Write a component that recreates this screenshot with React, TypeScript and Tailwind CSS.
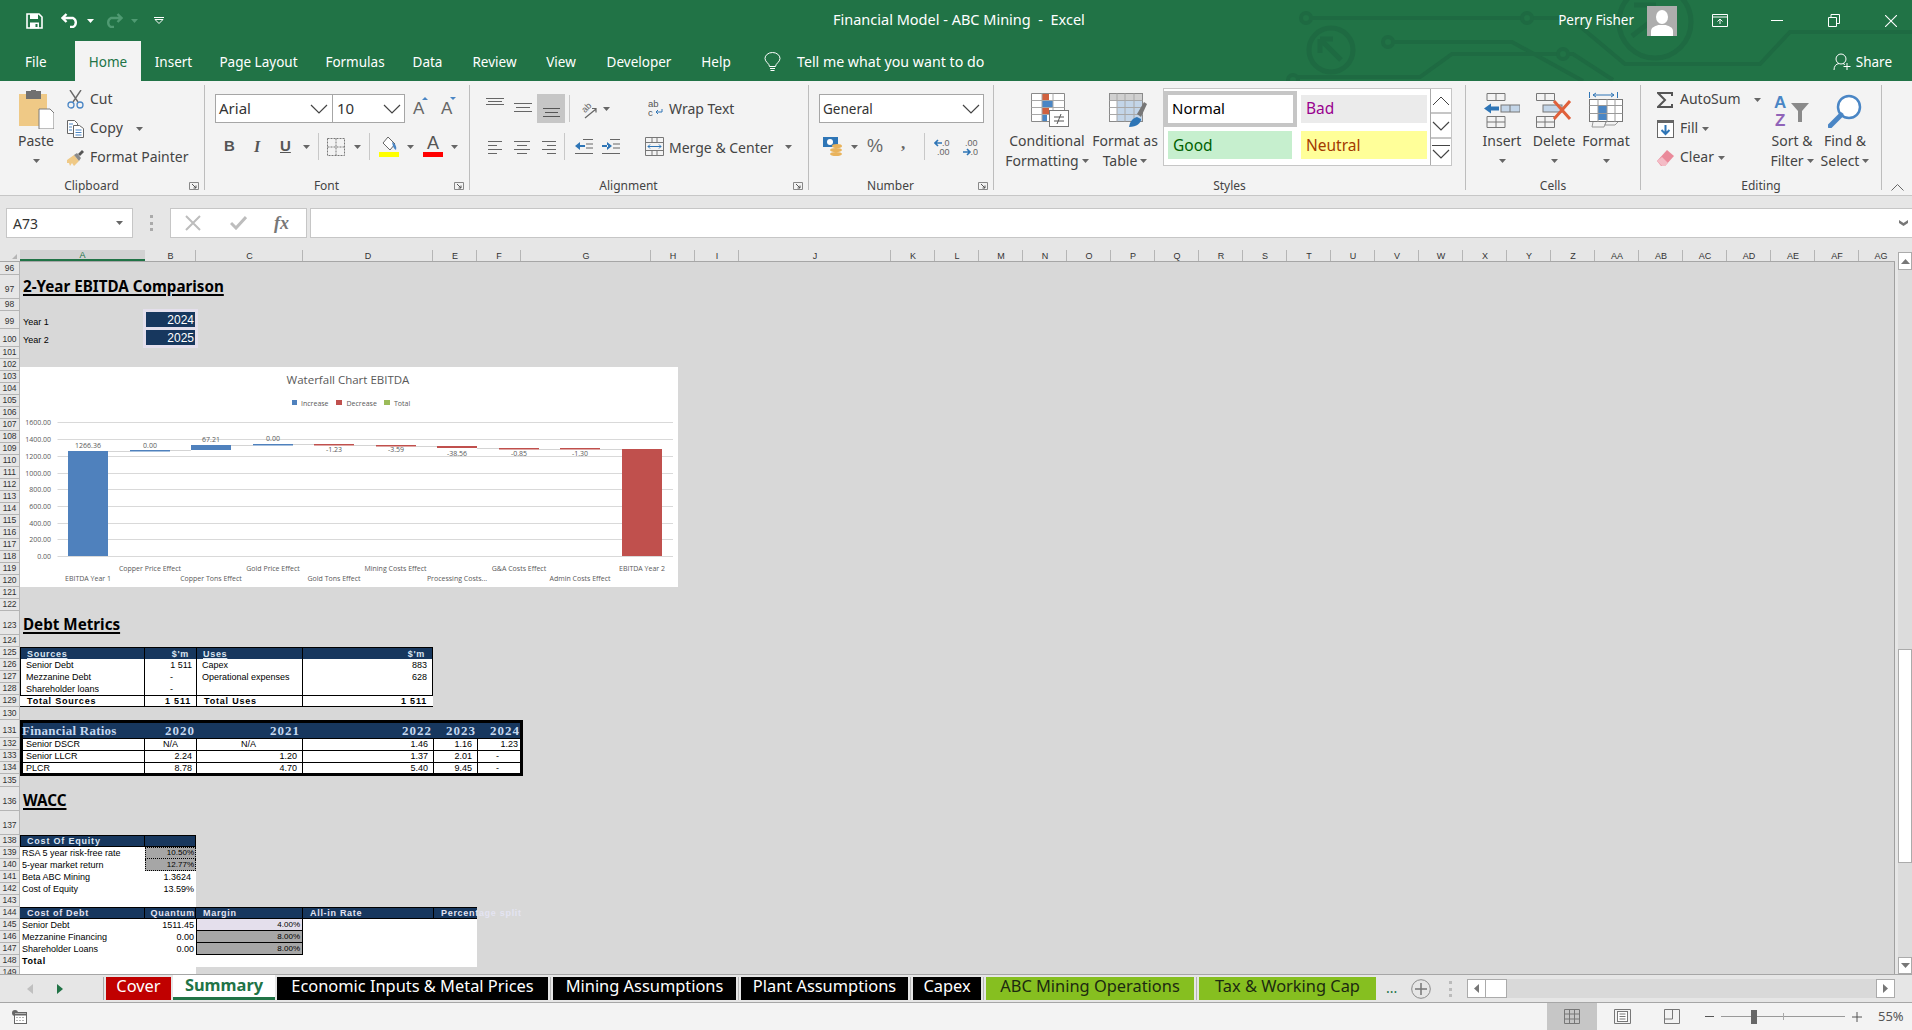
import { ReactNode } from 'react';

const Caret = ({ className = '' }: { className?: string }) => (
  <svg width="7" height="4" viewBox="0 0 7 4" className={`shrink-0 ${className}`}>
    <path d="M0 0h7L3.5 4z" fill="#666" />
  </svg>
);

const Chevron = () => (
  <svg width="18" height="10" viewBox="0 0 18 10" className="shrink-0">
    <path d="M1 1l8 8 8-8" fill="none" stroke="#444" strokeWidth="1.2" />
  </svg>
);

const Launcher = () => (
  <svg width="10" height="8" viewBox="0 0 10 8" className="shrink-0 mt-[4px] ml-[6px] mr-[5px]">
    <path d="M.5 7.5V.5h9v7z" fill="none" stroke="#888" />
    <path d="M3 2l4 4M7 3.5V6H4.5" fill="none" stroke="#555" />
  </svg>
);

const Group = ({ w, label, launcher, children }: { w: string; label: string; launcher?: boolean; children: ReactNode }) => (
  <div className={`flex flex-col shrink-0 h-[105px] border-r border-[#bdbdbd] ${w}`}>
    <div className="flex h-[93px]">{children}</div>
    <div className="flex h-[12px]">
      <div className="flex-1 text-center text-[12px] leading-[16px] text-[#444]">{label}</div>
      {launcher && <Launcher />}
    </div>
  </div>
);

const BigButton = ({ w, icon, lines, caretRow }: { w: string; icon: ReactNode; lines: string[]; caretRow?: boolean }) => (
  <div className={`flex flex-col items-center shrink-0 text-[14px] text-[#444] ${w}`}>
    <div className="h-[46px] flex items-center justify-center">{icon}</div>
    <div className="h-[20px] leading-[20px] whitespace-nowrap">{lines[0]}</div>
    {caretRow ? (
      <div className="h-[20px] flex items-center"><Caret /></div>
    ) : (
      <div className="h-[20px] leading-[20px] whitespace-nowrap flex items-center gap-[3px]">
        {lines[1]} <Caret />
      </div>
    )}
  </div>
);

const Circuit = () => (
  <svg viewBox="0 0 1912 81" className="absolute inset-0 w-full h-full" fill="none" stroke="#1e6a42" strokeWidth="4">
    <circle cx="1306" cy="18" r="5" />
    <path d="M1311 18h211M1532 18h38l55 46h135l30-32h122" />
    <circle cx="1527" cy="18" r="5" />
    <circle cx="1388" cy="42" r="5" />
    <path d="M1393 42h119l71 39" />
    <circle cx="1293" cy="80" r="5" />
    <path d="M1298 77h122l32-23h106M1568 54h5l40 26" />
    <circle cx="1563" cy="54" r="5" />
    <circle cx="1331" cy="50" r="22" strokeWidth="5" />
    <path d="M1320 39h13M1320 39v14M1320 39l21 21" strokeWidth="5" />
    <circle cx="1655" cy="22" r="36" strokeWidth="5" />
    <path d="M1634 5h22M1658 16l-26 20" strokeWidth="5" />
  </svg>
);

const SaveIcon = () => (
  <svg width="17" height="16" viewBox="0 0 17 16" className="shrink-0">
    <path d="M1 1h12l3 3v11H1z" fill="none" stroke="#fff" strokeWidth="1.6" />
    <rect x="4" y="1" width="8" height="5" fill="#fff" />
    <rect x="4" y="9.5" width="9" height="6" fill="#fff" />
    <rect x="9.5" y="11" width="2" height="3" fill="#217346" />
  </svg>
);

const UndoIcon = ({ color }: { color: string }) => (
  <svg width="19" height="15" viewBox="0 0 19 15" className="shrink-0">
    <path d="M2 5h10a5 5 0 0 1 0 9H9M5.5 1L1.5 5l4 4" fill="none" stroke={color} strokeWidth="2.4" />
  </svg>
);

const TitleBar = () => (
  <div className="relative h-[81px] shrink-0 bg-[#217346] text-white overflow-hidden">
    <Circuit />
    <div className="relative flex items-center h-[41px] text-[13.5px]">
      <div className="w-[833px] flex items-center shrink-0 pl-[26px]">
        <SaveIcon />
        <div className="ml-[18px]"><UndoIcon color="#fff" /></div>
        <Caret className="ml-[7px] [&>path]:fill-white" />
        <div className="ml-[10px] -scale-x-100"><UndoIcon color="#4f9a72" /></div>
        <Caret className="ml-[8px] [&>path]:fill-[#4f9a72]" />
        <svg width="10" height="7" viewBox="0 0 10 7" className="ml-[16px]">
          <path d="M0 .5h10M1 2.5l4 4 4-4z" fill="none" stroke="#fff" />
        </svg>
      </div>
      <div className="whitespace-pre text-[14.5px] -mt-[1px]">Financial Model - ABC Mining  -  Excel</div>
      <div className="ml-auto flex items-center mr-[15px]">
        <span className="mr-[13px]">Perry Fisher</span>
        <svg width="30" height="30" viewBox="0 0 30 30" className="shrink-0">
          <rect width="30" height="30" fill="#adadad" />
          <ellipse cx="15" cy="11" rx="6" ry="7" fill="#fff" />
          <path d="M4 30v-5c0-4 5-5 7-6h8c2 1 7 2 7 6v5z" fill="#fff" />
        </svg>
        <svg width="16" height="13" viewBox="0 0 16 13" className="ml-[35px]">
          <path d="M.5.5h15v12H.5zM.5 3h15M8 10V5M5.5 7.5L8 5l2.5 2.5" fill="none" stroke="#fff" />
        </svg>
        <div className="ml-[43px] w-[12px] h-[1px] bg-white" />
        <svg width="12" height="13" viewBox="0 0 12 13" className="ml-[45px]">
          <path d="M.5 3.5h8v9h-8zM3 3.5v-3h8.500v9H8.500" fill="none" stroke="#fff" />
        </svg>
        <svg width="12" height="12" viewBox="0 0 12 12" className="ml-[45px]">
          <path d="M0 0l12 12M12 0L0 12" stroke="#fff" strokeWidth="1.1" />
        </svg>
      </div>
    </div>
    <div className="relative flex items-stretch h-[40px] text-[13.5px]">
      <div className="w-[75px] pl-[25px] leading-[42px] shrink-0">File</div>
      <div className="w-[66px] shrink-0 bg-[#f3f3f3] text-[#217346] text-center leading-[42px]">Home</div>
      {[
        ['Insert', 'w-[65px]'],
        ['Page Layout', 'w-[105px]'],
        ['Formulas', 'w-[88px]'],
        ['Data', 'w-[57px]'],
        ['Review', 'w-[77px]'],
        ['View', 'w-[56px]'],
        ['Developer', 'w-[100px]'],
        ['Help', 'w-[54px]'],
      ].map(([t, w]) => (
        <div key={t} className={`${w} shrink-0 text-center leading-[42px] whitespace-nowrap`}>{t}</div>
      ))}
      <svg width="17" height="20" viewBox="0 0 17 20" className="ml-[21px] self-center mt-[2px]">
        <path d="M5.500 14.500c0-3-4.500-4.500-4.500-8a7.500 6 0 0 1 15 0c0 3.500-4.500 5-4.500 8z" fill="none" stroke="#fff" />
        <path d="M6 16.500h5M6.500 18.500h4" stroke="#fff" />
      </svg>
      <div className="ml-[16px] leading-[42px] whitespace-nowrap text-[14.2px]">Tell me what you want to do</div>
      <div className="ml-auto mr-[20px] flex items-center gap-[4px] mt-[2px]">
        <svg width="19" height="18" viewBox="0 0 19 18">
          <circle cx="8" cy="6" r="5" fill="none" stroke="#fff" />
          <path d="M1 17c0-4 2-6 5-6.500M10 10.500l2 1M14 10v7M10.500 13.500h7" fill="none" stroke="#fff" />
        </svg>
        <span>Share</span>
      </div>
    </div>
  </div>
);

const SmallRow = ({ icon, text, caretGap }: { icon: ReactNode; text: string; caretGap?: string }) => (
  <div className="h-[29px] flex items-center text-[14px] text-[#444] whitespace-nowrap">
    <div className="w-[17px] flex justify-center shrink-0">{icon}</div>
    <span className="ml-[6px] -mt-[2px]">{text}</span>
    {caretGap && <Caret className={caretGap} />}
  </div>
);

const Clipboard = () => (
  <Group w="w-[205px]" label="Clipboard" launcher>
    <BigButton
      w="w-[72px] -mr-[5px]"
      caretRow
      lines={['Paste']}
      icon={
        <svg width="35" height="39" viewBox="0 0 35 39" className="mt-[3px]">
          <rect x="0" y="4" width="28" height="32" fill="#efc986" />
          <rect x="7" y="1" width="15" height="8" fill="#707070" />
          <rect x="12" y="0" width="5" height="3" fill="#707070" />
          <path d="M20 19h11l4 4v16H20z" fill="#fff" stroke="#7a7a7a" />
        </svg>
      }
    />
    <div className="flex flex-col">
      <SmallRow
        text="Cut"
        icon={
          <svg width="17" height="19" viewBox="0 0 17 19">
            <path d="M3 0l8 12M14 0L6 12" stroke="#6a6a6a" strokeWidth="1.4" />
            <circle cx="4" cy="15" r="3" fill="none" stroke="#4a86c5" strokeWidth="1.3" />
            <circle cx="13" cy="15" r="3" fill="none" stroke="#4a86c5" strokeWidth="1.3" />
          </svg>
        }
      />
      <SmallRow
        text="Copy"
        caretGap="ml-[13px]"
        icon={
          <svg width="17" height="18" viewBox="0 0 17 18">
            <path d="M.5.5h7l3 3v10H.5z" fill="#fff" stroke="#666" />
            <path d="M6.500 5.500h6l4 3v9h-10z" fill="#fff" stroke="#666" />
            <path d="M2 4h4M2 7h3M2 10h3M8.500 10h6M8.500 12.500h6M8.500 15h6" stroke="#4a86c5" />
          </svg>
        }
      />
      <SmallRow
        text="Format Painter"
        icon={
          <svg width="17" height="16" viewBox="0 0 17 16">
            <path d="M0 10l7-5 5 6-5 5-2-3-2 3-1-3-2 0z" fill="#efc986" />
            <path d="M7 5l5 6 2-3-4-5z" fill="#8a8a8a" />
            <path d="M11 4l4-4 2 2-4 4z" fill="#555" />
          </svg>
        }
      />
    </div>
  </Group>
);

const Lines = ({ ys, x0, x1 }: { ys: number[]; x0: number[]; x1: number[] }) => (
  <svg width="18" height="16" viewBox="0 0 18 16" className="shrink-0">
    {ys.map((y, i) => (
      <line key={y} x1={x0[i]} x2={x1[i]} y1={y + 0.5} y2={y + 0.5} stroke="#666" />
    ))}
  </svg>
);

const Font = () => (
  <Group w="w-[265px]" label="Font" launcher>
    <div className="flex flex-col pt-[9px] pl-[10px] gap-[9px]">
      <div className="flex items-center h-[29px] text-[15px] text-[#333]">
        <div className="w-[118px] h-[29px] bg-white border border-[#a6a6a6] flex items-center justify-between pl-[3px] pr-[4px]">
          <span>Arial</span>
          <Chevron />
        </div>
        <div className="w-[72px] h-[29px] bg-white border border-l-0 border-[#a6a6a6] flex items-center justify-between pl-[4px] pr-[3px]">
          <span>10</span>
          <Chevron />
        </div>
        <div className="relative ml-[8px] w-[14px] text-[17px] text-[#666] font-['Liberation_Sans']">
          A
          <svg width="6" height="3" viewBox="0 0 6 3" className="absolute top-[1px] -right-[1px]"><path d="M0 3l3-3 3 3z" fill="#4a86c5" /></svg>
        </div>
        <div className="relative ml-[14px] w-[14px] text-[17px] text-[#666] font-['Liberation_Sans']">
          A
          <svg width="6" height="3" viewBox="0 0 6 3" className="absolute top-[1px] -right-[1px]"><path d="M0 0h6L3 3z" fill="#4a86c5" /></svg>
        </div>
      </div>
      <div className="flex items-center h-[29px] text-[#555] text-[15px] font-['Liberation_Sans']">
        <b className="ml-[9px] w-[10px]">B</b>
        <i className="ml-[20px] w-[9px] font-bold font-['Liberation_Serif'] text-[16px]">I</i>
        <b className="ml-[17px] w-[10px] underline">U</b>
        <Caret className="ml-[13px]" />
        <div className="ml-[8px] w-[1px] h-[27px] bg-[#c8c8c8]" />
        <svg width="18" height="18" viewBox="0 0 18 18" className="ml-[8px]">
          <path d="M.5.5h17v17H.5zM9 .5v17M.5 9h17" fill="none" stroke="#777" strokeDasharray="2 1" />
        </svg>
        <Caret className="ml-[9px]" />
        <div className="ml-[8px] w-[1px] h-[27px] bg-[#c8c8c8]" />
        <svg width="20" height="21" viewBox="0 0 20 21" className="ml-[9px]">
          <path d="M9 1l7 7-5 6-7-7z" fill="#fff" stroke="#666" />
          <path d="M13 6c3 2 5 4 4 8-2-1-3-3-4-8z" fill="#4a86c5" />
          <rect x="0" y="16" width="20" height="5" fill="#ffff00" />
        </svg>
        <Caret className="ml-[8px]" />
        <div className="ml-[9px] w-[20px] h-[21px] flex flex-col items-center">
          <span className="text-[18px] leading-[15px] font-normal">A</span>
          <div className="mt-[1px] w-[20px] h-[5px] bg-[#ff0000]" />
        </div>
        <Caret className="ml-[8px]" />
      </div>
    </div>
  </Group>
);

const Alignment = () => (
  <Group w="w-[339px]" label="Alignment" launcher>
    <div className="flex flex-col pt-[9px] pl-[16px] gap-[9px] w-[170px] shrink-0">
      <div className="flex items-center h-[29px]">
        <svg width="18" height="10" viewBox="0 0 18 10" className="self-start mt-[4px]"><path d="M0 .5h18M2 3.500h14M0 6.500h18" stroke="#666" /></svg>
        <svg width="18" height="11" viewBox="0 0 18 11" className="ml-[10px]"><path d="M0 .5h18M2 4.500h14M0 8.500h18" stroke="#666" /></svg>
        <div className="ml-[5px] w-[28px] h-[29px] bg-[#c6c6c6] flex items-end justify-center pb-[5px]">
          <svg width="17" height="10" viewBox="0 0 17 10"><path d="M0 .5h17M2 4.500h13M0 8.500h17" stroke="#555" /></svg>
        </div>
        <div className="ml-[4px] w-[1px] h-[27px] bg-[#c8c8c8]" />
        <svg width="18" height="20" viewBox="0 -3 18 20" className="ml-[9px]">
          <text x="3" y="10" fontSize="9" fill="#666" fontFamily="Liberation Sans" transform="rotate(-45 6 7)">ab</text>
          <path d="M6 16L17 7M13 6.500h4v4" fill="none" stroke="#666" strokeWidth="1.2" />
        </svg>
        <Caret className="ml-[6px]" />
      </div>
      <div className="flex items-center h-[29px]">
        <Lines ys={[2, 6, 10, 14]} x0={[2, 2, 2, 2]} x1={[16, 11, 16, 11]} />
        <div className="ml-[9px]"><Lines ys={[2, 6, 10, 14]} x0={[1, 4, 1, 4]} x1={[17, 14, 17, 14]} /></div>
        <div className="ml-[9px]"><Lines ys={[2, 6, 10, 14]} x0={[2, 7, 2, 7]} x1={[16, 16, 16, 16]} /></div>
        <div className="ml-[6px] w-[1px] h-[27px] bg-[#c8c8c8]" />
        <svg width="18" height="16" viewBox="0 0 18 16" className="ml-[10px]">
          <path d="M8 .5h10M11 5h7M11 9h7M0 14.500h18" stroke="#666" />
          <path d="M0 7l5-4v8zM4 6h6v2H4z" fill="#2e75b6" />
        </svg>
        <svg width="18" height="16" viewBox="0 0 18 16" className="ml-[9px]">
          <path d="M8 .5h10M11 5h7M11 9h7M0 14.500h18" stroke="#666" />
          <path d="M10 7L5 3v8zM0 6h6v2H0z" fill="#2e75b6" />
        </svg>
      </div>
    </div>
    <div className="flex flex-col pt-[9px] gap-[9px]">
      <div className="flex items-center h-[29px] ml-[8px] text-[14px] text-[#444]">
        <svg width="15" height="21" viewBox="0 -2 15 21">
          <text x="0" y="7" fontSize="9.500" fill="#555" fontFamily="Liberation Sans">ab</text>
          <text x="0" y="16" fontSize="9.500" fill="#555" fontFamily="Liberation Sans">c</text>
          <path d="M14 9v3H8M10 10l-2 2 2 2" fill="none" stroke="#2e75b6" />
        </svg>
        <span className="ml-[6px] -mt-[1px]">Wrap Text</span>
      </div>
      <div className="flex items-center h-[29px] ml-[5px] text-[14px] text-[#444] whitespace-nowrap">
        <svg width="19" height="19" viewBox="0 0 19 19">
          <path d="M.5.5h18v18H.5zM.5 5.500h18M.5 13.500h18M7 .5v5M12 .5v5M7 13.500v5M12 13.500v5" fill="none" stroke="#777" />
          <path d="M3 9.500h13M5 7.500l-2 2 2 2M14 7.500l2 2-2 2" fill="none" stroke="#2e75b6" />
        </svg>
        <span className="ml-[5px] pt-[1px]">Merge &amp; Center</span>
        <Caret className="ml-[12px]" />
      </div>
    </div>
  </Group>
);

const NumberGroup = () => (
  <Group w="w-[185px]" label="Number" launcher>
    <div className="flex flex-col pt-[9px] pl-[10px] gap-[9px]">
      <div className="w-[165px] h-[29px] bg-white border border-[#a6a6a6] flex items-center justify-between pl-[3px] pr-[3px] text-[13.5px] text-[#333]">
        <span className="pt-[1px]">General</span>
        <Chevron />
      </div>
      <div className="flex items-center h-[29px] text-[#666]">
        <svg width="20" height="19" viewBox="0 0 20 19" className="ml-[4px]">
          <rect x="0" y="0" width="15" height="10" fill="#2e75b6" />
          <circle cx="7" cy="5" r="3" fill="#fff" />
          <ellipse cx="14" cy="9" rx="5" ry="2" fill="#e9b35c" />
          <ellipse cx="13" cy="13" rx="6" ry="2" fill="#e9b35c" />
          <ellipse cx="13" cy="17" rx="6" ry="2" fill="#e9b35c" />
        </svg>
        <Caret className="ml-[8px]" />
        <span className="ml-[9px] w-[16px] text-[18px] font-['Liberation_Sans']">%</span>
        <span className="ml-[18px] w-[6px] text-[17px] font-bold font-['Liberation_Serif'] -mt-[6px]">,</span>
        <div className="ml-[17px] w-[1px] h-[27px] bg-[#c8c8c8]" />
        <svg width="16" height="21" viewBox="0 -2 16 21" className="ml-[9px]" fontFamily="Liberation Sans" fontSize="9">
          <path d="M1 5h7M4 2L1 5l3 3" fill="none" stroke="#2e75b6" strokeWidth="1.6" />
          <text x="8" y="8" fill="#666">.0</text>
          <text x="3" y="16.500" fill="#666">.00</text>
        </svg>
        <svg width="16" height="21" viewBox="0 -2 16 21" className="ml-[12px]" fontFamily="Liberation Sans" fontSize="9">
          <text x="3" y="8" fill="#666">.00</text>
          <path d="M1 14h7M5 11l3 3-3 3" fill="none" stroke="#2e75b6" strokeWidth="1.6" />
          <text x="8.500" y="16.500" fill="#666">.0</text>
        </svg>
      </div>
    </div>
  </Group>
);

const StyleCell = ({ className, text }: { className: string; text: string }) => (
  <div className={`h-[28px] flex items-center pl-[5px] text-[15.500px] ${className}`}>{text}</div>
);

const Styles = () => (
  <Group w="w-[472px]" label="Styles">
    <div className="pl-[13px] flex">
      <BigButton
        w="w-[80px]"
        lines={['Conditional', 'Formatting']}
        icon={
          <svg width="38" height="34" viewBox="0 0 38 34" className="mt-[3px] ml-[5px]">
            <path d="M.5.5h33v28H.5z" fill="#fff" stroke="#8a8a8a" />
            <rect x="11" y="1" width="7" height="6" fill="#d0613f" />
            <rect x="11" y="8" width="11" height="6" fill="#4a86c5" />
            <rect x="11" y="15" width="7" height="6" fill="#d0613f" />
            <rect x="11" y="22" width="5" height="6" fill="#4a86c5" />
            <path d="M.5 7.500h33M.5 14.500h33M.5 21.500h33M11 .5v28M22 .5v28" stroke="#a8a8a8" />
            <rect x="18.500" y="17.500" width="19" height="16" fill="#fff" stroke="#777" />
            <path d="M23 24h10M23 28h10M30 21l-4 10" stroke="#555" />
          </svg>
        }
      />
      <BigButton
        w="w-[76px]"
        lines={['Format as', 'Table']}
        icon={
          <svg width="38" height="34" viewBox="0 0 38 34" className="mt-[3px] ml-[6px]">
            <rect x=".5" y=".5" width="33" height="28" fill="#fff" stroke="#8a8a8a" />
            <rect x="1" y="1" width="32" height="6" fill="#d0d0d0" />
            <rect x="8" y="8" width="25" height="20" fill="#c3d5e8" />
            <path d="M.5 7.500h33M.5 14.500h33M.5 21.500h33M8 .5v28M16 .5v28M25 .5v28" stroke="#a8a8a8" />
            <path d="M28 21l7-12 3 2-6 13z" fill="#777" />
            <path d="M20 34c1-6 4-9 8-10l4 2c0 4-4 8-12 8z" fill="#2e75b6" />
          </svg>
        }
      />
    </div>
    <div className="mt-[3px] flex h-[78px] w-[289px] shrink-0 bg-white border border-[#c6c6c6]">
      <div className="w-[133px] shrink-0 flex flex-col">
        <div className="mt-[2px] h-[36px] border-[4px] border-[#c6c6c6] bg-white flex items-center pl-[4px] pb-[1px] text-[15px] text-black">
          Normal
        </div>
        <StyleCell className="mt-[4px] ml-[4px] w-[124px] pt-[2px] bg-[#c6efce] text-[#006100]" text="Good" />
      </div>
      <div className="ml-[4px] w-[126px] shrink-0 flex flex-col">
        <StyleCell className="mt-[6px] bg-[#ebebeb] text-[#99008f]" text="Bad" />
        <StyleCell className="mt-[8px] pt-[2px] bg-[#ffff99] text-[#a33a00]" text="Neutral" />
      </div>
      <div className="ml-auto w-[21px] shrink-0 flex flex-col border-l border-[#ababab]">
        <div className="h-[25px] border-b-2 border-[#c6c6c6] flex items-center justify-center">
          <svg width="18" height="10" viewBox="0 0 18 10"><path d="M1 9l8-8 8 8" fill="none" stroke="#444" /></svg>
        </div>
        <div className="h-[25px] border-b-2 border-[#c6c6c6] flex items-center justify-center">
          <Chevron />
        </div>
        <div className="flex-1 flex flex-col items-center justify-center gap-[3px]">
          <div className="w-[18px] h-[1px] bg-[#444]" />
          <Chevron />
        </div>
      </div>
    </div>
  </Group>
);

const Cells = () => (
  <Group w="w-[175px]" label="Cells">
    <div className="pl-[10px] flex">
      <BigButton
        w="w-[52px]"
        caretRow
        lines={['Insert']}
        icon={
          <svg width="36" height="35" viewBox="0 0 36 35" className="mt-[5px]">
            <path d="M3 .5h18v7H3zM12 .5v7M3 23.500h18v11H3zM12 23.500v11M3 29h18" fill="none" stroke="#777" />
            <rect x="17" y="12" width="19" height="7" fill="#c3d5e8" stroke="#777" />
            <path d="M26 12v7" stroke="#777" />
            <path d="M0 15.500l7-5v3h8v4H7v3z" fill="#2e75b6" />
          </svg>
        }
      />
      <BigButton
        w="w-[52px]"
        caretRow
        lines={['Delete']}
        icon={
          <svg width="36" height="35" viewBox="0 0 36 35" className="mt-[5px]">
            <path d="M.5.5h18v7H.5zM9 .5v7M.5 23.500h18v11H.5zM9 23.500v11M.5 29h18" fill="none" stroke="#777" />
            <rect x="7" y="12" width="19" height="7" fill="#c3d5e8" stroke="#777" />
            <path d="M18 8l16 18M34 8L18 26" stroke="#e0603a" strokeWidth="3" />
          </svg>
        }
      />
      <BigButton
        w="w-[52px]"
        caretRow
        lines={['Format']}
        icon={
          <svg width="34" height="36" viewBox="0 0 34 36" className="mt-[4px]">
            <path d="M.5 0v6M28.500 0v6M4 3h21M7 1L4 3l3 2M22 1l3 2-3 2" fill="none" stroke="#2e75b6" />
            <rect x=".5" y="7.500" width="33" height="22" fill="#fff" stroke="#777" />
            <rect x="9" y="14" width="9" height="14" fill="#4a86c5" />
            <path d="M.5 13.500h33M.5 21.500h33M9 7v23M18 7v23M26 7v23M4 30l-1 5h12l2-5M17 30l-1 3h10l3-3" fill="none" stroke="#999" />
          </svg>
        }
      />
    </div>
  </Group>
);

const Editing = () => (
  <Group w="w-[241px]" label="Editing">
    <div className="pl-[16px] w-[129px] shrink-0 flex flex-col">
      <div className="h-[29px] flex items-center text-[14px] text-[#444]">
        <svg width="16" height="16" viewBox="0 0 16 16" className="ml-[0px] shrink-0">
          <path d="M15 4V1H1l7 7-7 7h14v-3" fill="none" stroke="#555" strokeWidth="2" />
        </svg>
        <span className="ml-[7px] -mt-[2px]">AutoSum</span>
        <Caret className="ml-[13px]" />
      </div>
      <div className="h-[29px] flex items-center text-[14px] text-[#444]">
        <svg width="17" height="18" viewBox="0 0 17 18" className="shrink-0">
          <rect x=".5" y=".5" width="16" height="17" fill="#fff" stroke="#666" />
          <rect x="1" y="1" width="15" height="2" fill="#666" />
          <path d="M8.500 5v9M4.500 10l4 4 4-4" fill="none" stroke="#2e75b6" strokeWidth="2" />
        </svg>
        <span className="ml-[6px] -mt-[2px]">Fill</span>
        <Caret className="ml-[4px]" />
      </div>
      <div className="h-[29px] flex items-center text-[14px] text-[#444]">
        <svg width="17" height="16" viewBox="0 0 17 16" className="shrink-0">
          <path d="M0 11L10 0l7 6L8 16H4z" fill="#ea8a9a" />
          <path d="M0 11l5 5H8l3-3-6-6z" fill="#f4bcc6" />
        </svg>
        <span className="ml-[6px] -mt-[2px]">Clear</span>
        <Caret className="ml-[4px]" />
      </div>
    </div>
    <BigButton
      w="w-[44px]"
      lines={['Sort &', 'Filter']}
      icon={
        <svg width="36" height="40" viewBox="0 -3 36 40" className="mt-[6px]" fontFamily="Liberation Sans" fontWeight="700" fontSize="17">
          <text x="0" y="14" fill="#4a86c5">A</text>
          <text x="1" y="32" fill="#9063b8">Z</text>
          <path d="M17 9h18l-7 8v11h-4V17z" fill="#8a8a8a" />
        </svg>
      }
    />
    <BigButton
      w="w-[50px] ml-[6px]"
      lines={['Find &', 'Select']}
      icon={
        <svg width="34" height="34" viewBox="0 0 34 34" className="mt-[5px]">
          <circle cx="21" cy="13" r="11" fill="#fff" stroke="#4a86c5" strokeWidth="2.500" />
          <path d="M13 21L2 32" stroke="#4a86c5" strokeWidth="5" strokeLinecap="round" />
        </svg>
      }
    />
  </Group>
);

const Ribbon = () => (
  <div className="h-[115px] shrink-0 flex pt-[4px] bg-[#f3f3f3] border-b border-[#c6c6c6]">
    <Clipboard />
    <Font />
    <Alignment />
    <NumberGroup />
    <Styles />
    <Cells />
    <Editing />
    <div className="flex-1 flex items-end justify-center pb-[4px]">
      <svg width="13" height="7" viewBox="0 0 13 7"><path d="M.5 6.500l6-6 6 6" fill="none" stroke="#666" /></svg>
    </div>
  </div>
);

const FormulaBar = () => (
  <div className="h-[54px] shrink-0 bg-[#e6e6e6] pt-[12px] flex items-start">
    <div className="ml-[6px] w-[127px] h-[30px] bg-white border border-[#c6c6c6] flex items-center justify-between pl-[6px] pr-[9px] text-[14px] text-[#333]">
      A73
      <Caret />
    </div>
    <div className="ml-[17px] w-[3px] h-[16px] mt-[7px] flex flex-col justify-between">
      <div className="h-[3px] bg-[#aaa]" />
      <div className="h-[3px] bg-[#aaa]" />
      <div className="h-[3px] bg-[#aaa]" />
    </div>
    <div className="ml-[17px] w-[137px] h-[30px] bg-white border border-[#c6c6c6] flex items-center">
      <svg width="16" height="16" viewBox="0 0 16 16" className="ml-[14px]">
        <path d="M1 1l14 14M15 1L1 15" stroke="#bdbdbd" strokeWidth="2" />
      </svg>
      <svg width="17" height="14" viewBox="0 0 17 14" className="ml-[29px]">
        <path d="M1 7l5 5L16 1" fill="none" stroke="#bdbdbd" strokeWidth="3" />
      </svg>
      <span className="ml-[27px] font-['Liberation_Serif'] italic font-bold text-[18px] text-[#777]">fx</span>
    </div>
    <div className="ml-[3px] flex-1 h-[30px] bg-white border-y border-l border-[#c6c6c6] flex items-center justify-end pr-[4px]">
      <svg width="9" height="6" viewBox="0 0 9 6"><path d="M0 0l4.500 3L9 0v3L4.500 6 0 3z" fill="#777" /></svg>
    </div>
  </div>
);

const colWidths: [string, string][] = [
  ['A', 'w-[125px]'], ['B', 'w-[51px]'], ['C', 'w-[107px]'], ['D', 'w-[130px]'], ['E', 'w-[44px]'], ['F', 'w-[44px]'],
  ['G', 'w-[130px]'], ['H', 'w-[44px]'], ['I', 'w-[44px]'], ['J', 'w-[152px]'],
  ...['K', 'L', 'M', 'N', 'O', 'P', 'Q', 'R', 'S', 'T', 'U', 'V', 'W', 'X', 'Y', 'Z', 'AA', 'AB', 'AC', 'AD', 'AE', 'AF', 'AG'].map(
    (c): [string, string] => [c, 'w-[44px]'],
  ),
];

const ColumnHeaders = () => (
  <div className="h-[12px] shrink-0 flex bg-[#e6e6e6] font-['Liberation_Sans'] text-[9px] leading-[12px] text-[#333] border-b border-[#a6a6a6] overflow-hidden">
    <div className="w-[20px] shrink-0 relative">
      <svg width="5" height="5" viewBox="0 0 5 5" className="absolute right-[3px] bottom-[2px]"><path d="M5 0v5H0z" fill="#b5b5b5" /></svg>
    </div>
    {colWidths.map(([c, w]) =>
      c === 'A' ? (
        <div key={c} className={`${w} shrink-0 text-center bg-[#d2d2d2] text-[#217346] border-b-2 border-[#217346] leading-[11px]`}>{c}</div>
      ) : (
        <div key={c} className={`${w} shrink-0 text-center pl-[1px] border-r border-[#b5b5b5]`}>{c}</div>
      ),
    )}
  </div>
);

const rowH = (n: number) => {
  if (n === 96) return 'h-[12.5px]';
  if ([97, 123, 136, 137].includes(n)) return 'h-[24px] pb-[3px]';
  if ([99, 100, 131].includes(n)) return 'h-[18px] pb-[1px]';
  if ([130, 135].includes(n)) return 'h-[13px]';
  return 'h-[12px]';
};

const RowHeaders = () => (
  <div className="w-[20px] shrink-0 flex flex-col bg-[#e6e6e6] font-['Liberation_Sans'] text-[8.5px] text-[#333] overflow-hidden border-r border-[#b5b5b5]">
    {Array.from({ length: 54 }, (_, i) => 96 + i).map((n) => (
      <div key={n} className={`${rowH(n)} shrink-0 flex items-end justify-center leading-[11px] border-b border-[#b5b5b5]`}>{n}</div>
    ))}
  </div>
);

const Heading = ({ children, className = '' }: { children: string; className?: string }) => (
  <div className={`h-[24px] shrink-0 pl-[3px] flex items-end ${className}`}>
    <span className="font-['Noto_Sans'] font-bold text-[15.200px] leading-[21px] text-black underline underline-offset-2 decoration-[1.500px]">{children}</span>
  </div>
);

const Chart = () => {
  const grid: [number, string][] = [
    [55, '1600.00'], [72, '1400.00'], [89, '1200.00'], [106, '1000.00'], [122, '800.00'], [139, '600.00'], [156, '400.00'], [172, '200.00'], [189, '0.00'],
  ];
  const bars: [number, number, number, string, string, number][] = [
    [48, 84, 105, '#4f81bd', '1266.36', 79],
    [110, 83, 1.5, '#4f81bd', '0.00', 79],
    [171, 78, 5, '#4f81bd', '67.21', 73],
    [233, 77, 1.5, '#4f81bd', '0.00', 72],
    [294, 77, 1.5, '#c0504d', '-1.23', 83],
    [356, 78, 1.5, '#c0504d', '-3.59', 83],
    [417, 79, 2, '#c0504d', '-38.56', 87],
    [479, 81, 1.5, '#c0504d', '-0.85', 87],
    [540, 81, 1.5, '#c0504d', '-1.30', 87],
    [602, 82, 107, '#c0504d', '', 0],
  ];
  const connectors: [number, number, number][] = [
    [88, 110, 84], [150, 171, 83], [211, 233, 78], [273, 294, 77], [334, 356, 78], [396, 417, 79], [457, 479, 81], [519, 540, 82], [580, 602, 82],
  ];
  const axisLabels: [number, number, string][] = [
    [130, 201, 'Copper Price Effect'], [253, 201, 'Gold Price Effect'], [375.500, 201, 'Mining Costs Effect'], [499, 201, 'G&A Costs Effect'], [622, 201, 'EBITDA Year 2'],
    [68, 211, 'EBITDA Year 1'], [191, 211, 'Copper Tons Effect'], [314, 211, 'Gold Tons Effect'], [437, 211, 'Processing Costs...'], [560, 211, 'Admin Costs Effect'],
  ];
  return (
    <svg width="658" height="220" viewBox="0 0 658 220" className="block shrink-0 bg-white mt-[20.5px] mb-[23.500px]" fontFamily="Open Sans" fill="#595959">
      <text x="328" y="17" fontSize="11.500" textAnchor="middle">Waterfall Chart EBITDA</text>
      <rect x="272" y="33" width="5" height="5" fill="#4f81bd" />
      <text x="281" y="38.500" fontSize="7">Increase</text>
      <rect x="316" y="33" width="6" height="5" fill="#c0504d" />
      <text x="326.500" y="38.500" fontSize="7">Decrease</text>
      <rect x="364" y="33" width="6" height="5" fill="#9bbb59" />
      <text x="374" y="38.500" fontSize="7">Total</text>
      {grid.map(([y, t]) => (
        <g key={t}>
          <line x1="37.500" x2="653" y1={y + 0.5} y2={y + 0.5} stroke="#d9d9d9" />
          <text x="31" y={y + 2.5} fontSize="7" textAnchor="end">{t}</text>
        </g>
      ))}
      {connectors.map(([a, b, y]) => (
        <line key={a} x1={a} x2={b} y1={y + 0.5} y2={y + 0.5} stroke="#d4d4d4" />
      ))}
      {bars.map(([x, y, h, c, t, ly]) => (
        <g key={x}>
          <rect x={x} y={y} width="40" height={h} fill={c} />
          {t && <text x={x + 20} y={ly + 2} fontSize="7" textAnchor="middle">{t}</text>}
        </g>
      ))}
      {axisLabels.map(([x, y, t]) => (
        <text key={t} x={x} y={y + 2.5} fontSize="7" textAnchor="middle">{t}</text>
      ))}
    </svg>
  );
};

const navy = 'bg-[#17375e]';

const SourcesTable = () => {
  const rows: [string, string, string, string][] = [
    ['Senior Debt', '1 511', 'Capex', '883'],
    ['Mezzanine Debt', '-', 'Operational expenses', '628'],
    ['Shareholder loans', '-', '', ''],
  ];
  return (
    <div className="w-[413px] shrink-0">
      <div className={`h-[12px] flex ${navy} text-[#dbe5f1] font-bold leading-[12px] tracking-[0.7px] border-x border-t border-black`}>
        <div className="w-[124px] shrink-0 pl-[6px] underline border-r border-black">Sources</div>
        <div className="w-[52px] shrink-0 text-right pr-[7px] border-r border-black">$'m</div>
        <div className="w-[106px] shrink-0 pl-[6px] underline border-r border-black">Uses</div>
        <div className="flex-1 text-right pr-[7px]">$'m</div>
      </div>
      {rows.map((r) => (
        <div key={r[0]} className="h-[12px] flex bg-white leading-[12px] text-black border-x border-black">
          <div className="w-[124px] shrink-0 pl-[5px] border-r border-black whitespace-nowrap">{r[0]}</div>
          <div className={`w-[52px] shrink-0 border-r border-black ${r[1] === '-' ? 'text-center pl-[2px]' : 'text-right pr-[4px]'}`}>{r[1]}</div>
          <div className="w-[106px] shrink-0 pl-[5px] border-r border-black whitespace-nowrap">{r[2]}</div>
          <div className="flex-1 text-right pr-[5px]">{r[3]}</div>
        </div>
      ))}
      <div className="h-[12px] flex bg-white leading-[11px] font-bold tracking-[0.8px] text-black border-y border-black">
        <div className="w-[125px] shrink-0 pl-[7px] border-r border-black">Total Sources</div>
        <div className="w-[52px] shrink-0 text-right pr-[5px] border-r border-black">1 511</div>
        <div className="w-[106px] shrink-0 pl-[7px] border-r border-black">Total Uses</div>
        <div className="flex-1 text-right pr-[6px]">1 511</div>
      </div>
    </div>
  );
};

const RatioRow = ({ cells, h }: { cells: string[]; h: string }) => (
  <div className={`${h} flex bg-white text-black leading-[11px] border-t border-black`}>
    <div className="w-[122px] shrink-0 pl-[3px] border-r border-black">{cells[0]}</div>
    <div className={`w-[52px] shrink-0 border-r border-black ${cells[1] === 'N/A' ? 'text-center' : 'text-right pr-[4px]'}`}>{cells[1]}</div>
    <div className={`w-[106px] shrink-0 border-r border-black ${cells[2] === 'N/A' ? 'text-left pl-[44px]' : 'text-right pr-[5px]'}`}>{cells[2]}</div>
    <div className="w-[131px] shrink-0 border-r border-black text-right pr-[5px]">{cells[3]}</div>
    <div className="w-[44px] shrink-0 border-r border-black text-right pr-[5px]">{cells[4]}</div>
    <div className={`flex-1 ${cells[5] === '-' ? 'text-center pr-[3px]' : 'text-right pr-[2px]'}`}>{cells[5]}</div>
  </div>
);

const RatiosTable = () => (
  <div className="w-[503px] shrink-0 border-[3px] border-black">
    <div className={`h-[15px] flex ${navy} text-[#c5d9f1] font-['Liberation_Serif'] font-bold text-[13px] leading-[15px] tracking-[1px]`}>
      <div className="w-[122px] shrink-0 -ml-[1px] mr-[1px] tracking-[0.25px] whitespace-nowrap">Financial Ratios</div>
      <div className="w-[52px] shrink-0 text-right pr-[2px]">2020</div>
      <div className="w-[106px] shrink-0 text-right pr-[3px]">2021</div>
      <div className="w-[131px] shrink-0 text-right pr-[2px]">2022</div>
      <div className="w-[44px] shrink-0 text-right pr-[2px]">2023</div>
      <div className="flex-1 text-right">2024</div>
    </div>
    <RatioRow h="h-[12px]" cells={['Senior DSCR', 'N/A', 'N/A', '1.46', '1.16', '1.23']} />
    <RatioRow h="h-[12px]" cells={['Senior LLCR', '2.24', '1.20', '1.37', '2.01', '-']} />
    <RatioRow h="h-[11px]" cells={['PLCR', '8.78', '4.70', '5.40', '9.45', '-']} />
  </div>
);

const EquityTable = () => (
  <div className="w-[176px] shrink-0 bg-white text-black leading-[12px]">
    <div className={`h-[12px] flex ${navy} text-[#dbe5f1] font-bold tracking-[0.8px] border border-black leading-[11px]`}>
      <div className="w-[124px] pl-[6px] border-r border-black whitespace-nowrap">Cost Of Equity</div>
    </div>
    <div className="h-[12px] flex">
      <div className="w-[125px] shrink-0 pl-[2px]">RSA 5 year risk-free rate</div>
      <div className="flex-1 bg-[#a6a6a6] border border-dotted border-black text-right pr-[1px] text-[8px] leading-[10px]">10.50%</div>
    </div>
    <div className="h-[12px] flex">
      <div className="w-[125px] shrink-0 pl-[2px]">5-year market return</div>
      <div className="flex-1 bg-[#a6a6a6] border border-dotted border-black border-t-0 text-right pr-[1px] text-[8px] leading-[11px]">12.77%</div>
    </div>
    <div className="h-[12px] flex justify-between pr-[5px] pl-[2px]"><span>Beta ABC Mining</span><span>1.3624</span></div>
    <div className="h-[12px] flex justify-between pr-[2px] pl-[2px]"><span>Cost of Equity</span><span>13.59%</span></div>
    <div className="h-[12px]" />
  </div>
);

const DebtTable = () => {
  const rows: [string, string, string, string][] = [
    ['Senior Debt', '1511.45', '4.00%', 'bg-[#e4dfec]'],
    ['Mezzanine Financing', '0.00', '8.00%', 'bg-[#a6a6a6]'],
    ['Shareholder Loans', '0.00', '8.00%', 'bg-[#a6a6a6]'],
  ];
  return (
    <div className="w-[457px] shrink-0 bg-white text-black leading-[12px]">
      <div className={`h-[12px] flex ${navy} text-[#e4e4f2] font-bold tracking-[0.7px] border-y border-black leading-[10px] whitespace-nowrap`}>
        <div className="w-[125px] shrink-0 pl-[7px] border-r border-black">Cost of Debt</div>
        <div className="w-[51px] shrink-0 text-right border-r border-black">Quantum</div>
        <div className="w-[107px] shrink-0 pl-[7px] border-r border-black">Margin</div>
        <div className="w-[131px] shrink-0 pl-[7px] border-r border-black">All-in Rate</div>
        <div className="w-[43px] shrink-0 pl-[7px]">Percentage split</div>
      </div>
      {rows.map((r) => (
        <div key={r[0]} className="h-[12px] flex">
          <div className="w-[125px] shrink-0 pl-[2px]">{r[0]}</div>
          <div className="w-[51px] shrink-0 text-right pr-[2px]">{r[1]}</div>
          <div className={`w-[107px] shrink-0 text-right pr-[2px] text-[8px] border-x border-b border-black leading-[11px] ${r[3]}`}>{r[2]}</div>
        </div>
      ))}
      <div className="h-[12px] pl-[2px] font-bold tracking-[0.6px]">Total</div>
    </div>
  );
};

const SheetBody = () => (
  <div className="flex-1 flex bg-[#d8d8d8] overflow-hidden border-r border-[#a0a0a0]">
    <RowHeaders />
    <div className="flex-1 flex flex-col font-['Liberation_Sans'] text-[9px]">
      <div className="h-[12.5px] shrink-0" />
      <Heading className="pb-[2px]">2-Year EBITDA Comparison</Heading>
      <div className="h-[12px] shrink-0" />
      <div className="h-[36px] shrink-0 flex text-black">
        <div className="w-[123px] flex flex-col pl-[3px]">
          <div className="h-[18px] leading-[23px]">Year 1</div>
          <div className="h-[18px] leading-[23px]">Year 2</div>
        </div>
        <div className="-mt-[1.5px] w-[55px] h-[39px] bg-[#e4dfec] flex flex-col items-center gap-[3px] pt-[3px]">
          <div className={`w-[49px] h-[15px] ${navy} text-white text-right text-[12px] leading-[16px] pr-[1px]`}>2024</div>
          <div className={`w-[49px] h-[15px] ${navy} text-white text-right text-[12px] leading-[16px] pr-[1px]`}>2025</div>
        </div>
      </div>
      <Chart />
      <Heading>Debt Metrics</Heading>
      <div className="h-[12px] shrink-0" />
      <SourcesTable />
      <div className="h-[13px] shrink-0" />
      <RatiosTable />
      <div className="h-[11px] shrink-0" />
      <Heading>WACC</Heading>
      <div className="h-[24px] shrink-0" />
      <EquityTable />
      <DebtTable />
      <div className="w-[176px] h-[12px] bg-white shrink-0" />
    </div>
  </div>
);

const VerticalScroll = () => (
  <div className="w-[17px] shrink-0 bg-[#e6e6e6] pl-[3px] flex flex-col">
    <div className="flex-1 flex flex-col mt-[2px] bg-[#dcdcdc]">
      <div className="h-[18px] bg-white border border-[#ababab] flex items-center justify-center">
        <svg width="9" height="5" viewBox="0 0 9 5"><path d="M0 5l4.500-5L9 5z" fill="#777" /></svg>
      </div>
      <div className="mt-[379px] h-[214px] bg-white border border-[#ababab]" />
      <div className="mt-auto h-[17px] bg-white border border-[#ababab] flex items-center justify-center">
        <svg width="9" height="5" viewBox="0 0 9 5"><path d="M0 0l4.500 5L9 0z" fill="#777" /></svg>
      </div>
    </div>
  </div>
);

const Sep = () => (
  <div className="w-[5px] shrink-0 flex justify-center">
    <div className="w-[1px] h-full bg-[#b5b5b5]" />
  </div>
);

const TabBar = () => {
  const tabs: [string, string][] = [
    ['Economic Inputs & Metal Prices', 'w-[271px] bg-black text-white'],
    ['Mining Assumptions', 'w-[183px] bg-black text-white'],
    ['Plant Assumptions', 'w-[167px] bg-black text-white'],
    ['Capex', 'w-[68px] bg-black text-white'],
    ['ABC Mining Operations', 'w-[208px] bg-[#86bf20] text-[#1c2a10]'],
    ['Tax & Working Cap', 'w-[177px] bg-[#86bf20] text-[#1c2a10]'],
  ];
  return (
    <div className="h-[29px] shrink-0 flex bg-[#e6e6e6] border-t border-[#a6a6a6] border-b text-[16.400px] font-['Noto_Sans']">
      <div className="w-[106px] shrink-0 flex items-center relative">
        <svg width="6" height="10" viewBox="0 0 6 10" className="ml-[27px]"><path d="M6 0v10L0 5z" fill="#c0c0c0" /></svg>
        <svg width="6" height="10" viewBox="0 0 6 10" className="ml-[24px]"><path d="M0 0v10l6-5z" fill="#217346" /></svg>
        <div className="ml-auto mr-[2px] w-[1px] h-[23px] bg-[#aaa]" />
      </div>
      <div className="flex h-[25px] pt-[2px] items-stretch">
        <div className="w-[65px] shrink-0 bg-[#c00000] text-white text-center leading-[17px]">Cover</div>
        <div className="w-[2px]" />
        <div className="w-[102px] shrink-0 -mt-[2px] h-[25px] bg-white text-[#217346] font-bold text-center leading-[19px] border-b-[3px] border-[#217346]">Summary</div>
        <div className="w-[2px]" />
        {tabs.map(([t, c], i) => (
          <div key={t} className="flex">
            {i > 0 && <Sep />}
            <div className={`shrink-0 text-center leading-[17px] whitespace-nowrap ${c}`}>{t}</div>
          </div>
        ))}
      </div>
      <div className="ml-[10px] text-[#217346] leading-[26px] text-[14px]">...</div>
      <svg width="20" height="20" viewBox="0 0 20 20" className="ml-[14px] mt-[4px] shrink-0">
        <circle cx="10" cy="10" r="9.300" fill="none" stroke="#8a8a8a" />
        <path d="M10 4v12M4 10h12" stroke="#777" strokeWidth="1.500" />
      </svg>
      <div className="ml-[18px] w-[3px] h-[16px] mt-[6px] flex flex-col justify-between shrink-0">
        <div className="h-[3px] bg-[#bbb]" />
        <div className="h-[3px] bg-[#bbb]" />
        <div className="h-[3px] bg-[#bbb]" />
      </div>
      <div className="ml-[15px] w-[428px] h-[19px] mt-[4px] bg-[#d9d9d9] flex shrink-0">
        <div className="w-[19px] bg-white border border-[#ababab] flex items-center justify-center">
          <svg width="5" height="9" viewBox="0 0 5 9"><path d="M5 0v9L0 4.500z" fill="#777" /></svg>
        </div>
        <div className="w-[21px] bg-white border-y border-r border-[#ababab]" />
        <div className="ml-auto w-[19px] bg-white border border-[#ababab] flex items-center justify-center">
          <svg width="5" height="9" viewBox="0 0 5 9"><path d="M0 0v9l5-4.500z" fill="#777" /></svg>
        </div>
      </div>
    </div>
  );
};

const StatusBar = () => (
  <div className="flex-1 flex items-stretch bg-[#f3f3f3] text-[#555]">
    <svg width="15" height="14" viewBox="0 0 15 14" className="ml-[12px] mt-[7px]">
      <circle cx="3" cy="3" r="3" fill="#666" />
      <rect x="2.500" y="2.500" width="12" height="11" fill="#fff" stroke="#666" />
      <path d="M3 4.500h11" stroke="#666" strokeWidth="2" />
      <path d="M4.500 7.500h1M7.500 7.500h1M10.500 7.500h1M4.500 10.500h1M7.500 10.500h1M10.500 10.500h1" stroke="#666" />
    </svg>
    <div className="ml-auto w-[50px] bg-[#c6c6c6] flex items-center justify-center">
      <svg width="16" height="15" viewBox="0 0 16 15">
        <path d="M.5.500h15v14H.5zM.5 5h15M.5 10h15M5.500.5v14M10.500.5v14" fill="none" stroke="#777" />
      </svg>
    </div>
    <div className="w-[50px] flex items-center justify-center">
      <svg width="17" height="15" viewBox="0 0 17 15">
        <path d="M.5.500h16v14H.5z" fill="none" stroke="#777" />
        <rect x="3.500" y="2.500" width="10" height="10" fill="#fff" stroke="#777" />
        <path d="M5.500 5h6M5.500 7.500h6M5.500 10h6" stroke="#777" />
      </svg>
    </div>
    <div className="w-[50px] flex items-center justify-center">
      <svg width="16" height="15" viewBox="0 0 16 15">
        <path d="M.5.500h15v14H.5zM.5 10h8V.5" fill="none" stroke="#777" />
      </svg>
    </div>
    <div className="ml-[8px] w-[9px] flex items-center"><div className="w-[9px] h-[1.500px] bg-[#555]" /></div>
    <div className="ml-[7px] w-[124px] relative flex items-center">
      <div className="w-full h-[1px] bg-[#999]" />
      <div className="absolute left-[62px] top-[10px] w-[1px] h-[7px] bg-[#aaa]" />
      <div className="absolute left-[30px] top-[7px] w-[6px] h-[14px] bg-[#666]" />
    </div>
    <svg width="10" height="10" viewBox="0 0 10 10" className="ml-[7px] self-center"><path d="M5 0v10M0 5h10" stroke="#555" /></svg>
    <div className="ml-[16px] mr-[10px] w-[24px] text-[13px] leading-[27px] whitespace-nowrap">55%</div>
  </div>
);

export default function App() {
  return (
    <div className="w-[1912px] h-[1030px] flex flex-col overflow-hidden bg-[#f3f3f3] font-['Noto_Sans']">
      <TitleBar />
      <Ribbon />
      <FormulaBar />
      <div className="h-[724px] shrink-0 flex">
        <div className="w-[1895px] shrink-0 flex flex-col overflow-hidden">
          <ColumnHeaders />
          <SheetBody />
        </div>
        <VerticalScroll />
      </div>
      <TabBar />
      <StatusBar />
    </div>
  );
}
